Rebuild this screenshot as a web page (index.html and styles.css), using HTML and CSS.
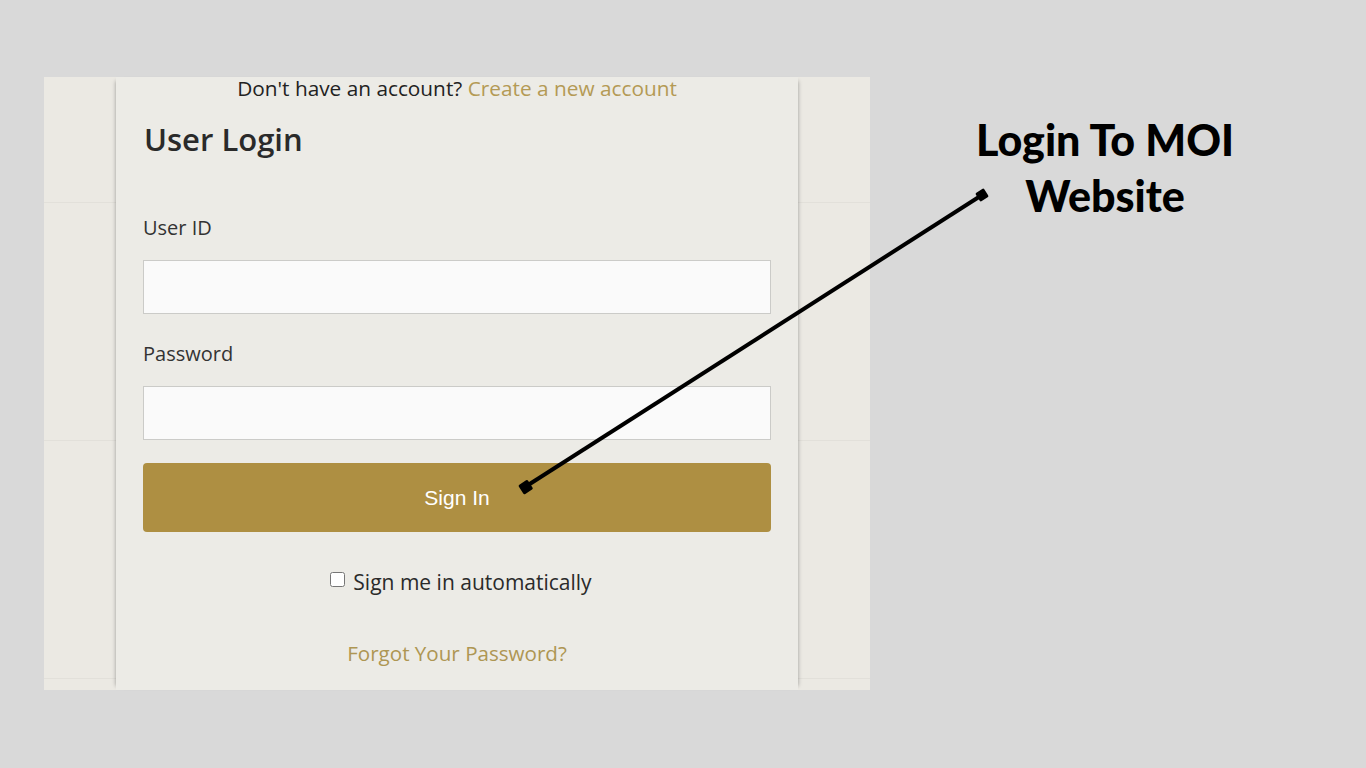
FILE: index.html
```html
<!DOCTYPE html>
<html>
    <head>
        <meta charset="utf-8">
        <link rel="stylesheet" href="styles.css">
    </head>
    <body>
        <div class="stage">
            <div class="shot">
                <div class="side"></div>
                <div class="card">
                    <p class="signup">Don't have an account? <a href="#">Create a new account</a></p>
                    <h2 class="title">User Login</h2>
                    <label class="label" for="userid">User ID</label>
                    <input class="field" id="userid" type="text">
                    <label class="label" for="pass">Password</label>
                    <input class="field" id="pass" type="password">
                    <button class="signin">Sign In</button>
                    <label class="remember"><input type="checkbox"> Sign me in automatically</label>
                    <a class="forgot" href="#">Forgot Your Password?</a>
                </div>
                <div class="side"></div>
            </div>
            <div class="note">Login To MOI<br>Website</div>
        </div>

        <!-- pointer from the note to the button -->
        <svg class="pointer" width="1366" height="768" viewBox="0 0 1366 768">
            <line x1="982" y1="195" x2="525" y2="487" stroke="#000" stroke-width="4"/>
            <rect x="977" y="190" width="10" height="10" rx="1.5" transform="rotate(-33 982 195)"/>
            <rect x="520" y="482" width="11" height="11" rx="1.5" transform="rotate(-33 525 487)"/>
        </svg>
    </body>
</html>
```

FILE: styles.css
```css
*{
    box-sizing:border-box;
    margin:0;
    padding:0;
}
body{
    width:1366px;
    height:768px;
    background-color:#d9d9d9;
    overflow:hidden;
    position:relative;
}
.stage{
    display:flex;
    padding:77px 0 0 44px;
}
.shot{
    display:flex;
    width:826px;
    height:613px;
    background-color:#eae8e2;
}
.side{
    width:72px;
    background:
        repeating-linear-gradient(180deg, transparent 0, transparent 125px, #e2e0da 125px, #e2e0da 126px, transparent 126px, transparent 238px),
        #ebe9e3;
}
.card{
    width:682px;
    background-color:#ecebe6;
    /* side shadows only, the card runs past the top and bottom */
    box-shadow:-4px 0 4px -4px rgba(0,0,0,0.35), 4px 0 4px -4px rgba(0,0,0,0.35);
    padding:0 27px;
    display:flex;
    flex-direction:column;
    font-family:"Open Sans", "Noto Sans", sans-serif;
    color:#2b2b2b;
    position:relative;
}
.signup{
    text-align:center;
    font-size:20.8px;
    line-height:22px;
    color:#222;
}
.signup a{
    color:#b49a55;
    text-decoration:none;
}
.title{
    font-size:31px;
    font-weight:600;
    line-height:38px;
    margin-top:21px;
    margin-left:1px;
    color:#2a2a2a;
}
.label{
    font-size:20px;
    line-height:26px;
    margin-top:57px;
    color:#333;
}
.field + .label{
    margin-top:27px;
}
.field{
    height:54px;
    margin-top:19px;
    border:1px solid #cbcbc8;
    background-color:#fafafa;
    outline:none;
}
.signin{
    height:69px;
    margin-top:23px;
    border:none;
    border-radius:4px;
    background-color:#ae8f42;
    color:#fff;
    font-family:"Liberation Sans", Arial, sans-serif;
    font-size:21px;
}
.remember{
    align-self:center;
    margin:37px 0 0 8px;
    font-size:21px;
    line-height:26px;
    color:#2a2a2a;
    display:flex;
    align-items:center;
    gap:8px;
}
.remember input{
    width:15px;
    height:15px;
    margin-top:-5px;
}
.forgot{
    align-self:center;
    margin-top:45px;
    font-size:20.6px;
    line-height:26px;
    color:#ae9653;
    text-decoration:none;
}
.note{
    margin:35px 0 0 95px;
    width:280px;
    text-align:center;
    font-family:Lato, "Noto Sans", sans-serif;
    font-weight:900;
    font-size:43px;
    line-height:56px;
    color:#000;
}
.pointer{
    position:absolute;
    left:0;
    top:0;
}
```
